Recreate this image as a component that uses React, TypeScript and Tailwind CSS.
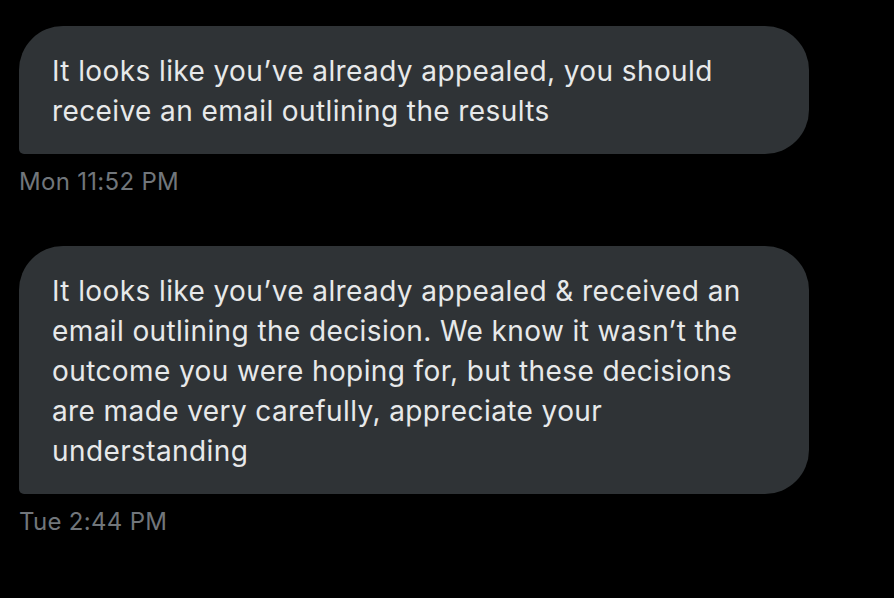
const messages = [
  {
    lines: [
      "It looks like you\u2019ve already appealed, you should",
      "receive an email outlining the results",
    ],
    time: "Mon 11:52 PM",
  },
  {
    lines: [
      "It looks like you\u2019ve already appealed & received an",
      "email outlining the decision. We know it wasn\u2019t the",
      "outcome you were hoping for, but these decisions",
      "are made very carefully, appreciate your",
      "understanding",
    ],
    time: "Tue 2:44 PM",
  },
];

export default function App() {
  return (
    <div className="min-h-screen w-full bg-black px-[19px] pt-[26px] font-['Inter',sans-serif]">
      <div className="flex flex-col gap-[50px]">
        {messages.map((m) => (
          <div key={m.time} className="flex flex-col">
            <div className="w-[790px] rounded-[44px] rounded-bl-[5px] bg-[#2f3336] pl-[33px] pr-[20px] pt-[25px] pb-[23px] text-[28px] leading-[40px] tracking-[0.4px] text-[#e7e9ea]">
              {m.lines.map((l, i) => (
                <div key={i} className="whitespace-nowrap">
                  {l}
                </div>
              ))}
            </div>
            <div className="mt-[14px] text-[24px] leading-[28px] tracking-[0.3px] text-[#71767b]">{m.time}</div>
          </div>
        ))}
      </div>
    </div>
  );
}
